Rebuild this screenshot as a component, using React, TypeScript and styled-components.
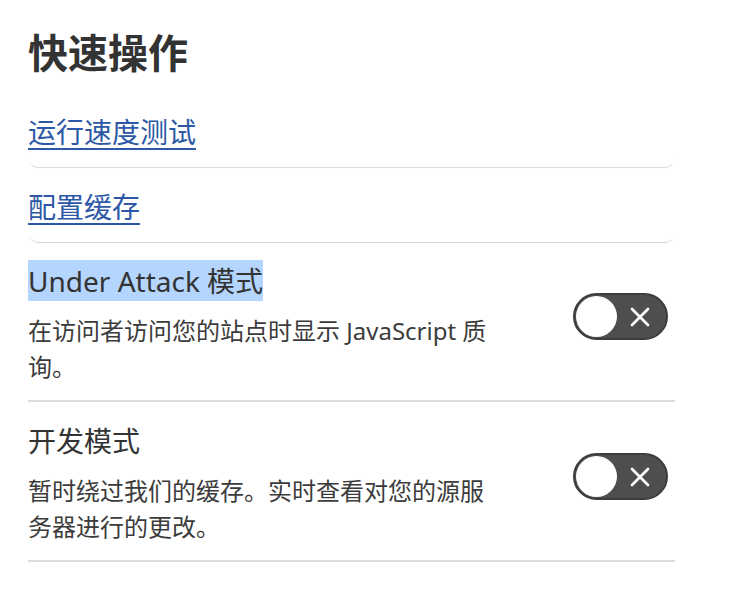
import React from "react";
import styled, { createGlobalStyle } from "styled-components";

const GlobalStyle = createGlobalStyle`
  html, body {
    margin: 0;
    padding: 0;
    background: #ffffff;
  }
  body {
    font-family: "Noto Sans", "Noto Sans CJK SC", sans-serif;
    color: #333333;
  }
  * { box-sizing: border-box; }
`;

const Page = styled.div`
  padding: 29px 75px 0 28px;
`;

const Heading = styled.h2`
  margin: 0 0 15px;
  font-size: 40px;
  line-height: 48px;
  font-weight: 700;
  color: #333333;
`;

const LinkCard = styled.div`
  padding: 24px 0 17px;
  border-radius: 10px;
  box-shadow: 0 2px 1px -1px rgba(0, 0, 0, 0.16);
`;

const ActionLink = styled.a`
  display: inline-block;
  font-size: 28px;
  line-height: 32px;
  color: #2d58a6;
  text-decoration: none;
  border-bottom: 2.5px solid #2d58a6;
  cursor: pointer;
`;

const SettingRow = styled.div`
  display: flex;
  align-items: center;
  justify-content: space-between;
  padding: 18px 0 15px;
  border-bottom: 2px solid #dcdcdc;
`;

const TextCol = styled.div`
  max-width: 472px;
`;

const SettingTitle = styled.div`
  font-size: 28px;
  line-height: 41px;
  color: #333333;
`;

const Mark = styled.span<{ $selected?: boolean }>`
  padding: 1.5px 0;
  background: ${(p) => (p.$selected ? "#b4d5fe" : "transparent")};
`;

const SettingDesc = styled.p`
  margin: 12px 0 0;
  font-size: 24px;
  line-height: 36px;
  color: #3c3c3c;
`;

const Toggle = styled.button<{ $on?: boolean }>`
  flex: none;
  width: 95px;
  height: 47px;
  margin: 0 7px 12px 0;
  padding: 0 16px 0 1px;
  border-radius: 24px;
  border: 2px solid #3d3d3d;
  background: ${(p) => (p.$on ? "#2d58a6" : "#4e4e4e")};
  display: flex;
  align-items: center;
  justify-content: space-between;
  cursor: pointer;
`;

const Knob = styled.span`
  width: 41px;
  height: 41px;
  border-radius: 50%;
  background: #ffffff;
`;

const XIcon = () => (
  <svg width="20" height="20" viewBox="0 0 20 20" aria-hidden="true">
    <path
      d="M2 2 L18 18 M18 2 L2 18"
      stroke="#ffffff"
      strokeWidth="2.6"
      strokeLinecap="round"
    />
  </svg>
);

type Setting = {
  title: string;
  desc: string;
  selected?: boolean;
};

const settings: Setting[] = [
  {
    title: "Under Attack 模式",
    desc: "在访问者访问您的站点时显示 JavaScript 质询。",
    selected: true,
  },
  {
    title: "开发模式",
    desc: "暂时绕过我们的缓存。实时查看对您的源服务器进行的更改。",
  },
];

const links = ["运行速度测试", "配置缓存"];

export default function App() {
  return (
    <>
      <GlobalStyle />
      <Page>
        <Heading>快速操作</Heading>
        {links.map((l) => (
          <LinkCard key={l}>
            <ActionLink>{l}</ActionLink>
          </LinkCard>
        ))}
        {settings.map((s) => (
          <SettingRow key={s.title}>
            <TextCol>
              <SettingTitle>
                <Mark $selected={s.selected}>{s.title}</Mark>
              </SettingTitle>
              <SettingDesc>{s.desc}</SettingDesc>
            </TextCol>
            <Toggle aria-label={s.title}>
              <Knob />
              <XIcon />
            </Toggle>
          </SettingRow>
        ))}
      </Page>
    </>
  );
}
